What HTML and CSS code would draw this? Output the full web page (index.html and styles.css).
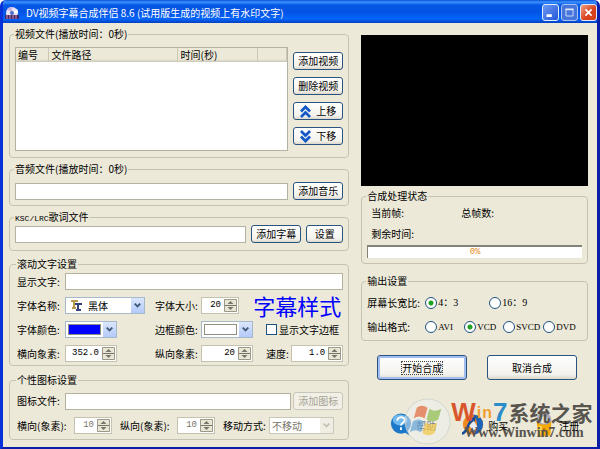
FILE: index.html
```html
<!DOCTYPE html>
<html lang="zh-CN">
<head>
    <meta charset="UTF-8">
    <meta name="viewport" content="width=device-width, initial-scale=1.0">
    <title>DV视频字幕合成伴侣</title>
    <link rel="stylesheet" href="styles.css">
</head>
<body>
    <!-- Icons used more than once -->
    <svg class="defs" aria-hidden="true">
        <symbol id="chevron" viewBox="0 0 12 16"><path d="M3 6l3 3 3-3" fill="none" stroke="currentColor" stroke-width="2"/></symbol>
        <symbol id="spin" viewBox="0 0 13 13">
            <path d="M.5 .5h12v12H.5z" fill="#e9e6d6" stroke="#9b998a"/>
            <path d="M1 6.500h11" stroke="#77756a"/>
            <path d="M6.500 2L9.500 5h-6zM6.500 11L9.500 8h-6z" fill="#77756a"/>
        </symbol>
    </svg>

    <div class="window">
        <header class="titlebar">
            <svg class="app-icon" viewBox="0 0 14 14">
                <circle cx="7" cy="7" r="6" fill="#e8e4f4"/>
                <path d="M7 7L2 3a6 6 0 0 1 5-2z" fill="#c9b2e4"/>
                <path d="M7 7l5-4a6 6 0 0 1 1 4z" fill="#fff"/>
                <circle cx="7" cy="7" r="2" fill="#4f6fc8"/>
                <path d="M0 9h14v4H0z" fill="#3c2b6b"/>
                <path d="M1 10h12M1 12h12" stroke="#d886a8" stroke-dasharray="2 1"/>
            </svg>
            <h1>DV视频字幕合成伴侣 8.6 (试用版生成的视频上有水印文字)</h1>
            <button class="win-btn" aria-label="最小化"><svg viewBox="0 0 17 17"><path d="M4 12h6" stroke="#fff" stroke-width="3"/></svg></button>
            <button class="win-btn dim" aria-label="最大化"><svg viewBox="0 0 17 17"><path d="M4.500 5v7.500h8V5M4 5h9" fill="none" stroke="#dbe6fb"/><path d="M4 5h9" stroke="#dbe6fb" stroke-width="2"/></svg></button>
            <button class="win-btn close" aria-label="关闭"><svg viewBox="0 0 17 17"><path d="M5 5l7 7M12 5l-7 7" stroke="#fff" stroke-width="2"/></svg></button>
        </header>

        <main>
            <div class="col">
                <!-- Video files -->
                <fieldset class="video">
                    <legend>视频文件(播放时间：0秒)</legend>
                    <div class="list">
                        <table>
                            <thead>
                                <tr><th class="c-no">编号</th><th class="c-path">文件路径</th><th class="c-time">时间(秒)</th><th></th></tr>
                            </thead>
                        </table>
                    </div>
                    <div class="side">
                        <button class="btn">添加视频</button>
                        <button class="btn">删除视频</button>
                        <button class="btn"><svg viewBox="0 0 12 14"><path d="M1 7l5-5 5 5M1 13l5-5 5 5" fill="none" stroke="#1458c8" stroke-width="3"/></svg>上移</button>
                        <button class="btn"><svg viewBox="0 0 12 14"><path d="M1 1l5 5 5-5M1 7l5 5 5-5" fill="none" stroke="#1458c8" stroke-width="3"/></svg>下移</button>
                    </div>
                </fieldset>

                <!-- Audio file -->
                <fieldset class="line audio">
                    <legend>音频文件(播放时间：0秒)</legend>
                    <input type="text" class="box" aria-label="音频文件">
                    <button class="btn">添加音乐</button>
                </fieldset>

                <!-- Lyrics -->
                <fieldset class="line lyric">
                    <legend><span class="mono">KSC/LRC</span>歌词文件</legend>
                    <input type="text" class="box" aria-label="歌词文件">
                    <button class="btn">添加字幕</button>
                    <button class="btn short">设置</button>
                </fieldset>

                <!-- Scrolling text -->
                <fieldset class="scroll">
                    <legend>滚动文字设置</legend>
                    <label for="text">显示文字:</label>
                    <input type="text" class="box wide" id="text">

                    <label for="font">字体名称:</label>
                    <div class="combo font">
                        <select id="font"><option>黑体</option></select>
                        <svg class="tt" viewBox="0 0 11 11"><path d="M0 1h7M3 1v7M1 8h4" stroke="#b79a4a" stroke-width="2"/><path d="M4 4h7M7 4v6M5 10h5" stroke="#33437a" stroke-width="2"/></svg>
                        <svg class="arrow"><use href="#chevron"/></svg>
                    </div>
                    <label for="size">字体大小:</label>
                    <div class="spin tiny"><input type="text" id="size" value="20"><svg><use href="#spin"/></svg></div>
                    <output class="sample">字幕样式</output>

                    <label for="color">字体颜色:</label>
                    <div class="combo color blue">
                        <select id="color" aria-label="字体颜色"></select>
                        <svg class="arrow"><use href="#chevron"/></svg>
                    </div>
                    <label for="edge">边框颜色:</label>
                    <div class="combo color">
                        <select id="edge" aria-label="边框颜色"></select>
                        <svg class="arrow"><use href="#chevron"/></svg>
                    </div>
                    <label class="check"><input type="checkbox">显示文字边框</label>

                    <label for="px">横向象素:</label>
                    <div class="spin"><input type="text" id="px" value="352.0"><svg><use href="#spin"/></svg></div>
                    <label for="py">纵向象素:</label>
                    <div class="spin"><input type="text" id="py" value="20"><svg><use href="#spin"/></svg></div>
                    <div class="speed">
                        <label for="speed">速度:</label>
                        <div class="spin"><input type="text" id="speed" value="1.0"><svg><use href="#spin"/></svg></div>
                    </div>
                </fieldset>

                <!-- Custom icon -->
                <fieldset class="logo">
                    <legend>个性图标设置</legend>
                    <div class="row">
                        <label for="icon">图标文件:</label>
                        <input type="text" class="box" id="icon">
                        <button class="btn" disabled>添加图标</button>
                    </div>
                    <div class="row">
                        <label for="ix">横向(象素):</label>
                        <div class="spin tiny"><input type="text" id="ix" value="10" disabled><svg><use href="#spin"/></svg></div>
                        <label for="iy">纵向(象素):</label>
                        <div class="spin tiny"><input type="text" id="iy" value="10" disabled><svg><use href="#spin"/></svg></div>
                        <label for="move" class="move">移动方式:</label>
                        <div class="combo off">
                            <select id="move" disabled><option>不移动</option></select>
                            <svg class="arrow"><use href="#chevron"/></svg>
                        </div>
                    </div>
                </fieldset>
            </div>

            <div class="col">
                <div class="preview"></div>

                <fieldset class="status">
                    <legend>合成处理状态</legend>
                    <div class="frames"><span>当前帧:</span><span>总帧数:</span></div>
                    <div>剩余时间:</div>
                    <div class="progress" role="progressbar" aria-valuenow="0">0%</div>
                </fieldset>

                <fieldset class="output">
                    <legend>输出设置</legend>
                    <div class="ratio">
                        <span>屏幕长宽比:</span>
                        <label><input type="radio" name="ratio" checked>4：3</label>
                        <label><input type="radio" name="ratio">16：9</label>
                    </div>
                    <div class="format">
                        <span>输出格式:</span>
                        <label><input type="radio" name="format">AVI</label>
                        <label><input type="radio" name="format" checked>VCD</label>
                        <label><input type="radio" name="format">SVCD</label>
                        <label><input type="radio" name="format">DVD</label>
                    </div>
                </fieldset>

                <div class="actions">
                    <button class="btn primary"><span>开始合成</span></button>
                    <button class="btn">取消合成</button>
                </div>

                <div class="links">
                    <a href="#">
                        <svg viewBox="0 0 24 26">
                            <circle cx="12" cy="12" r="11" fill="#1c78c8"/>
                            <path d="M14 20l7 5-2-8z" fill="#1c78c8"/>
                            <ellipse cx="11" cy="8" rx="8" ry="6" fill="#6fb9ee"/>
                            <path d="M8 9c0-5 8-5 8-1 0 3-4 3-4 6M12 16v3" fill="none" stroke="#fff" stroke-width="2"/>
                        </svg><span>帮助</span></a>
                    <a href="#">
                        <svg viewBox="0 0 24 26">
                            <circle cx="12" cy="13" r="11" fill="#f08a1c"/>
                            <path d="M12 2a11 11 0 0 1 0 22c6-6 6-15 0-22z" fill="#1e62b8"/>
                            <path d="M0 23C7 21 6 10 13 6l-1 15" fill="none" stroke="#1b4a94" stroke-width="3"/>
                            <path d="M8 14l5-5 4 7-5 4z" fill="#e8eef6"/>
                        </svg><span>购买</span></a>
                    <a href="#">
                        <svg viewBox="0 0 24 26">
                            <circle cx="12" cy="8" r="6" fill="none" stroke="#a9a7b4" stroke-width="4"/>
                            <path d="M4 10l5 3h6l5-3-1 15-13 1z" fill="#f6a800"/>
                            <path d="M6 14l4 1-1 9H7z" fill="#ffd34d"/>
                            <path d="M12 17v4" stroke="#a86a00" stroke-width="2"/>
                        </svg><span>注册</span></a>

                    <!-- Site watermark, the orb lies over the links -->
                    <div class="mark">
                        <svg class="orb" viewBox="0 0 48 48">
                            <circle cx="24" cy="24" r="23" fill="#eef2f2" fill-opacity=".5" stroke="#c9cdc8" stroke-opacity=".7"/>
                            <g opacity=".7">
                                <path d="M13 10q5-4 11 0l-3 11q-6-4-11 0z" fill="#e4683a"/>
                                <path d="M26 11q5 4 12 0l-3 11q-6 4-12 0z" fill="#8cbc4c"/>
                                <path d="M9 24q6-4 11 0l-3 11q-5-4-11 0z" fill="#62a4dc"/>
                                <path d="M22 25q6 4 12 0l-3 11q-6 4-12 0z" fill="#f4c844"/>
                            </g>
                        </svg>
                        <div class="brand">
                            <div class="name"><b class="w">W</b><b class="i">i</b><b class="n">n</b><b class="seven">7</b><span>系统之家</span></div>
                            <div class="url">Www.Winwin7.com</div>
                        </div>
                    </div>
                </div>
            </div>
        </main>
    </div>
</body>
</html>
```
FILE: styles.css
```css
* {
    box-sizing: border-box;
}
body {
    margin: 0;
    background: #fff;
    color: #000;
    font: 10px/12px "Noto Sans CJK SC", sans-serif;
}
input, select, button {
    margin: 0;
    font: inherit;
    color: inherit;
}
svg {
    display: block;
    flex: none;
}
.defs {
    position: absolute;
    width: 0;
    height: 0;
}
.window {
    display: flex;
    flex-direction: column;
    min-height: 100vh;
    border: solid #0a1ea8;
    border-width: 0 3px 3px;
    border-left-color: #0831d9;
    border-radius: 6px 6px 0 0;
    background: #ece9d8;
    overflow: hidden;
}

/* Title bar */
.titlebar {
    display: flex;
    align-items: center;
    gap: 2px;
    height: 23px;
    margin: 0 -3px;
    padding: 2px 3px 0 5px;
    background: linear-gradient(#0a4fd8, #3c93ff 2px, #0558e6 5px, #0353e4 12px, #0566fb 19px, #0340c0);
}
.titlebar h1 {
    flex: 1;
    margin: 0 0 0 5px;
    color: #fff;
    font-size: 10px;
    font-weight: normal;
}
.app-icon {
    width: 14px;
    height: 14px;
}
.win-btn {
    width: 17px;
    height: 17px;
    padding: 0;
    border: 1px solid #e3ecfd;
    border-radius: 3px;
    background: linear-gradient(135deg, #6c98f3, #2458d8);
}
.win-btn.dim {
    border-color: #a9c2f4;
    background: #4675dc;
}
.win-btn.close {
    background: linear-gradient(135deg, #f0a080, #d8401c 60%);
}

/* Layout */
main {
    display: grid;
    grid-template-columns: 3fr 2fr;
    gap: 12px;
    padding: 5px 9px 7px 6px;
}
.col {
    display: flex;
    flex-direction: column;
    min-width: 0;
}
fieldset {
    min-width: 0;
    margin: 0 0 5px;
    padding: 0 5px;
    border: 1px solid #c5c3b0;
    border-radius: 4px;
}
legend {
    height: 12px;
    margin-left: -1px;
    padding: 0 1px;
    white-space: nowrap;
}
.mono {
    font: 8px/12px "Liberation Mono", monospace;
}
label {
    white-space: nowrap;
}

/* Controls */
.btn {
    display: flex;
    align-items: center;
    justify-content: center;
    gap: 5px;
    flex: none;
    width: 50px;
    height: 18px;
    padding: 0;
    border: 1px solid #2a5480;
    border-radius: 3px;
    background: linear-gradient(#fff, #f3f2ec 80%, #dbd6ca);
    white-space: nowrap;
}
.btn svg {
    width: 11px;
    height: 13px;
}
.btn.short {
    width: 37px;
}
.btn:disabled {
    border-color: #c9c7ba;
    background: #f2f0e6;
    color: #a5a296;
}
.box {
    width: 100%;
    min-width: 0;
    height: 17px;
    padding: 0 3px;
    border: 1px solid #b4b2a0;
    background: #fff;
}
.spin {
    display: flex;
    align-items: center;
    width: 52px;
    height: 17px;
    padding-right: 1px;
    border: 1px solid #c5c3b0;
    background: #fff;
}
.spin.tiny {
    width: 38px;
}
.spin input {
    flex: 1;
    min-width: 0;
    height: 15px;
    padding: 0 3px 0 0;
    border: 0;
    background: none;
    font: 9px/15px "Liberation Mono", monospace;
    text-align: right;
}
.spin input:disabled {
    color: #77756a;
}
.spin svg {
    width: 13px;
    height: 13px;
}
.combo {
    position: relative;
    height: 17px;
}
.combo select {
    display: block;
    width: 100%;
    height: 100%;
    padding: 0 0 0 2px;
    border: 1px solid #a5b8cc;
    border-radius: 0;
    background: #fff;
    appearance: none;
}
.combo .arrow {
    position: absolute;
    top: 1px;
    right: 1px;
    width: 13px;
    height: 15px;
    background: linear-gradient(#dbe6fd, #b3c9f8);
    color: #3f587c;
}
.combo.font {
    width: 80px;
}
.combo.font select {
    padding-left: 22px;
}
.combo .tt {
    position: absolute;
    top: 3px;
    left: 6px;
    width: 11px;
    height: 11px;
}
.combo.color {
    width: 52px;
}
.combo.color::before {
    content: "";
    position: absolute;
    inset: 3px 16px 3px 3px;
    border: 1px solid #8e8e86;
    background: #fff;
}
.combo.blue::before {
    background: #00f;
}
.combo.off {
    width: 65px;
}
.combo.off select {
    border-color: #c9c7ba;
    color: #77756a;
    opacity: 1;
}
.combo.off .arrow {
    background: #f0eee4;
    color: #c5c3b6;
}

/* Left column */
.video {
    display: flex;
    gap: 5px;
    padding: 7px 5px 6px;
}
.list {
    flex: 1;
    height: 104px;
    border: 1px solid #b4b2a0;
    background: #fff;
}
table {
    width: 100%;
    table-layout: fixed;
    border-collapse: collapse;
}
th {
    height: 14px;
    padding: 0 3px;
    border-right: 1px solid #cbc8b6;
    background: linear-gradient(#ece9d8 80%, #cbc7b8);
    font-weight: normal;
    text-align: left;
}
.c-no {
    width: 32px;
    padding-left: 2px;
}
.c-path {
    width: 129px;
}
.c-time {
    width: 80px;
}
.side {
    display: flex;
    flex-direction: column;
    justify-content: center;
    gap: 7px;
    padding-bottom: 1px;
}
.line {
    display: flex;
    align-items: center;
    gap: 5px;
}
.audio {
    padding-top: 7px;
    padding-bottom: 5px;
}
.lyric {
    margin-bottom: 7px;
    padding-top: 2px;
    padding-bottom: 7px;
}
.scroll {
    display: grid;
    grid-template-columns: 48px 90px 46px 65px 1fr;
    grid-auto-rows: 17px;
    row-gap: 7px;
    align-items: center;
    margin-bottom: 8px;
    padding: 3px 5px 3px 7px;
}
.wide {
    grid-column: 2 / 6;
}
.sample {
    grid-column: 4 / 6;
    grid-row: 2;
    justify-self: end;
    padding-right: 2px;
    color: #00f;
    font-size: 22px;
    line-height: 17px;
}
.scroll .tiny {
    grid-column: 4;
    grid-row: 2;
}
.check, .output label {
    display: flex;
    align-items: center;
    gap: 2px;
}
.check input {
    width: 11px;
    height: 11px;
    border: 1px solid #1c5180;
    background: #fff;
    appearance: none;
}
.check input:checked {
    background: #21a121;
}
.speed {
    display: flex;
    align-items: center;
    justify-content: space-between;
}
.logo {
    margin: 0;
    padding: 6px 5px 5px 7px;
}
.row {
    display: flex;
    align-items: center;
}
.row + .row {
    margin-top: 7px;
}
.row label {
    flex: none;
    width: 57px;
}
.row label[for="icon"] {
    width: 48px;
}
.row .btn {
    margin-left: 2px;
}
.row .spin {
    margin-right: 8px;
}
.row .move {
    width: 46px;
}

/* Right column */
.preview {
    aspect-ratio: 3 / 2;
    margin: 7px 0 4px;
    background: #000;
}
.status {
    margin-bottom: 11px;
    padding: 5px 5px 5px;
}
.status > div {
    padding-left: 4px;
}
.frames {
    display: grid;
    grid-template-columns: 90px 1fr;
    margin-bottom: 9px;
}
.status .progress {
    height: 13px;
    margin-top: 5px;
    padding: 0;
    border: solid #858378;
    border-width: 2px 0 0 1px;
    background: #fff;
    color: #e88a20;
    font: 9px/11px "Liberation Mono", monospace;
    text-align: center;
}
.output {
    margin-bottom: 14px;
    padding: 10px 5px 7px;
}
.ratio, .format {
    display: grid;
    align-items: center;
    height: 12px;
}
.ratio {
    grid-template-columns: 58px 64px 1fr;
    margin-bottom: 12px;
}
.format {
    grid-template-columns: 58px 39px 39px 40px 1fr;
}
.output label {
    gap: 1px;
    font-family: "Liberation Serif", "Noto Sans CJK SC", serif;
}
.output .format label {
    font-size: 9px;
}
.output input {
    width: 12px;
    height: 12px;
    border: 1px solid #1c5180;
    border-radius: 50%;
    background: #fff;
    appearance: none;
}
.output input:checked {
    background: radial-gradient(circle, #21a121 2px, #fff 3px);
}
.actions {
    display: grid;
    grid-template-columns: 1fr 1fr;
    gap: 20px;
    padding: 0 11px 0 16px;
}
.actions .btn {
    width: 100%;
    height: 25px;
}
.btn.primary {
    box-shadow: inset 0 0 0 2px #a3bdf0;
}
.primary span {
    outline: 1px dotted #444;
}
.links {
    position: relative;
    display: grid;
    grid-template-columns: 72px 71px 1fr;
    margin-top: 30px;
    padding-left: 29px;
}
.links a {
    display: flex;
    align-items: center;
    gap: 4px;
    height: 28px;
    color: #000;
    text-decoration: none;
}
.links a span {
    position: relative;
    z-index: 1;
    padding-top: 3px;
}
.links svg {
    width: 22px;
    height: 25px;
}
.mark {
    position: absolute;
    top: -12px;
    left: 43px;
    display: flex;
    pointer-events: none;
}
.links .orb {
    position: relative;
    z-index: 2;
    width: 47px;
    height: 47px;
}
.brand {
    padding-top: 3px;
    color: #58544e;
    white-space: nowrap;
}
.name {
    display: flex;
    gap: 1px;
    font-size: 21px;
    font-weight: bold;
    line-height: 23px;
}
.name b {
    font: bold 26px/23px "Liberation Sans", sans-serif;
}
.name .w {
    color: #d9552c;
}
.name .i, .name .n {
    color: #f0a030;
    font-size: 16px;
}
.name .seven {
    color: #2a8cc8;
}
.url {
    padding-left: 13px;
    font: bold 14px/18px "Liberation Serif", serif;
}
```
